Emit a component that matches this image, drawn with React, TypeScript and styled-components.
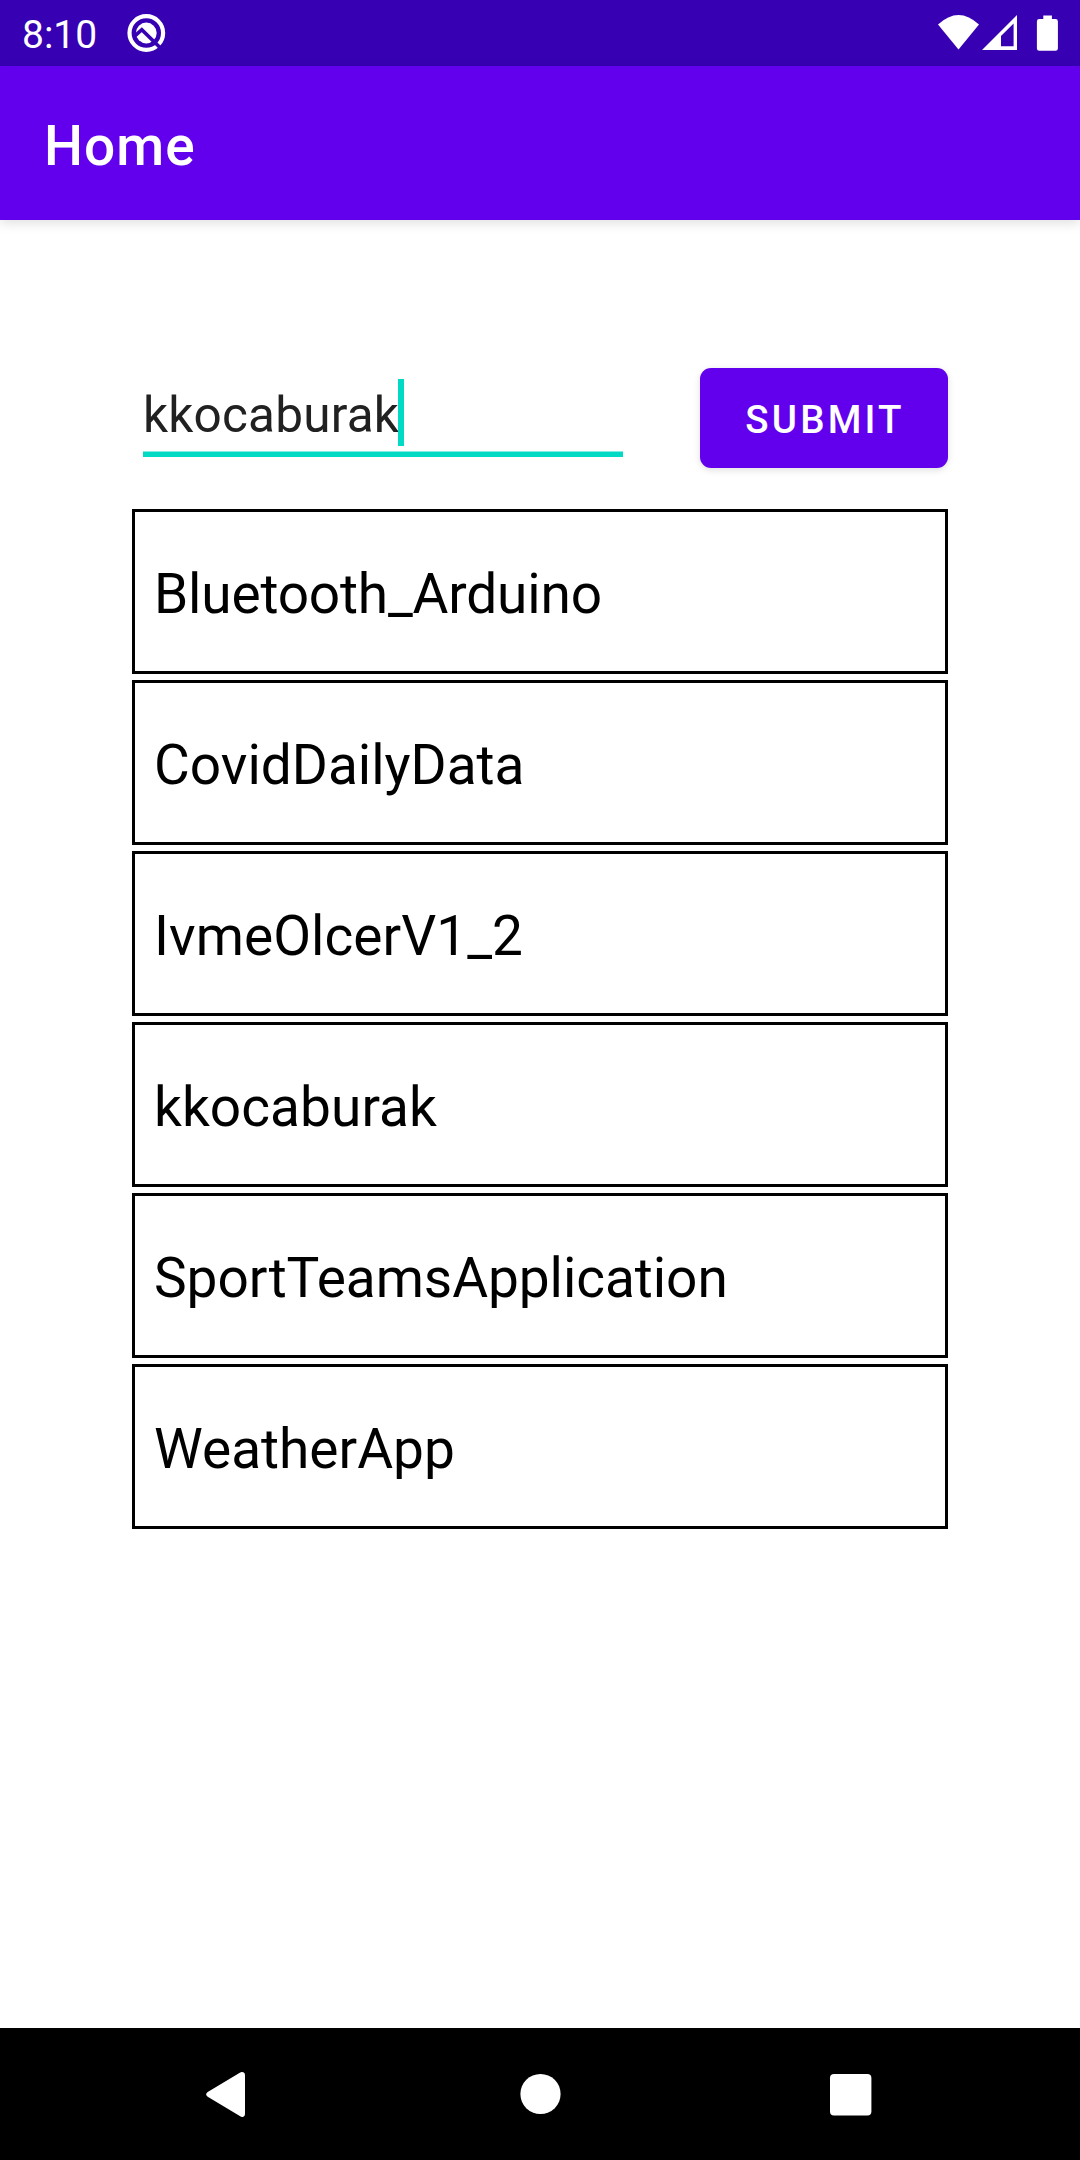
import React from "react";
import styled, { createGlobalStyle } from "styled-components";

const GlobalStyle = createGlobalStyle`
  *, *::before, *::after { box-sizing: border-box; }
  body { margin: 0; background: #fff; }
`;

const Screen = styled.div`
  display: flex;
  flex-direction: column;
  width: 1080px;
  height: 2160px;
  background: #fff;
  font-family: Roboto, "Noto Sans", sans-serif;
  overflow: hidden;
`;

const StatusBar = styled.header`
  display: flex;
  align-items: center;
  justify-content: space-between;
  height: 66px;
  padding: 0 21px 0 22px;
  background: #3700b3;
`;

const StatusGroup = styled.div<{ $gap: number }>`
  display: flex;
  align-items: center;
  gap: ${(p) => p.$gap}px;
  height: 66px;
`;

const Clock = styled.span`
  width: 75px;
  padding-top: 3px;
  color: #fff;
  font-size: 39px;
  line-height: 48px;
  white-space: nowrap;
`;

const SignalIcons = styled.svg`
  display: block;
`;

const AppBar = styled.div`
  display: flex;
  align-items: center;
  height: 154px;
  padding: 6px 44px 0;
  background: #6200ee;
  box-shadow: 0 3px 11px rgba(0, 0, 0, 0.13);
`;

const Title = styled.h1`
  margin: 0;
  color: #fff;
  font-size: 55px;
  font-weight: 500;
  line-height: 64px;
  letter-spacing: 1px;
`;

const Content = styled.main`
  display: flex;
  flex: 1;
  flex-direction: column;
  padding: 148px 132px 0;
`;

const SearchForm = styled.div`
  display: flex;
  align-items: flex-start;
  justify-content: space-between;
  height: 141px;
  padding-left: 11px;
`;

const Field = styled.div`
  display: flex;
  align-items: flex-start;
  width: 480px;
  height: 89px;
  padding-top: 11px;
  border-bottom: 5px solid #03dac5;
  box-shadow: inset 0 -1px 0 rgba(3, 218, 197, 0.5);
`;

const FieldText = styled.span`
  width: 255px;
  padding-top: 7px;
  color: #212121;
  font-size: 49.5px;
  line-height: 58px;
  letter-spacing: 0.2px;
  white-space: nowrap;
`;

const Caret = styled.span`
  width: 6px;
  height: 67px;
  background: #03dac5;
`;

const SubmitButton = styled.button`
  width: 248px;
  height: 100px;
  padding: 3px 0 0 2px;
  border: 0;
  border-radius: 11px;
  background: #6200ee;
  box-shadow: 0 2px 7px rgba(0, 0, 0, 0.13);
  color: #fff;
  font-family: inherit;
  font-size: 38.5px;
  font-weight: 500;
  line-height: 45px;
  letter-spacing: 3.2px;
`;

const RepoList = styled.ul`
  display: flex;
  flex-direction: column;
  gap: 6px;
  margin: 0;
  padding: 0;
  list-style: none;
`;

const RepoItem = styled.li<{ $tracking: number }>`
  display: flex;
  align-items: center;
  height: 165px;
  padding: 4px 19px 0;
  border: 3px solid #000;
  color: #000;
  font-size: 55px;
  line-height: 64px;
  letter-spacing: ${(p) => p.$tracking}px;
`;

const NavBar = styled.nav`
  display: flex;
  align-items: center;
  justify-content: space-between;
  height: 132px;
  padding: 0 187px 0 184px;
  background: #000;
`;

const NavIcon = styled.svg`
  display: block;
  fill: #fff;
`;

const repos = [
  { name: "Bluetooth_Arduino", tracking: -0.18 },
  { name: "CovidDailyData", tracking: 0 },
  { name: "IvmeOlcerV1_2", tracking: 0.04 },
  { name: "kkocaburak", tracking: 0.05 },
  { name: "SportTeamsApplication", tracking: -0.06 },
  { name: "WeatherApp", tracking: 0 },
];

export default function App() {
  return (
    <>
      <GlobalStyle />
      <Screen>
        <StatusBar>
          <StatusGroup $gap={29}>
            <Clock>8:10</Clock>
            <svg width="40" height="40" viewBox="0 0 40 40">
              <circle cx="20.3" cy="20" r="16.8" fill="none" stroke="#fff" strokeWidth="4.2" />
              <circle cx="20.3" cy="20" r="10.4" fill="#fff" />
              <path d="M9.2 22.7 15.8 16.7 34 34.5" fill="none" stroke="#3700b3" strokeWidth="3.6" />
            </svg>
          </StatusGroup>
          <SignalIcons width="121" height="66" viewBox="938 0 121 66" fill="#fff">
            <path d="M938 24.5Q958.5 5.5 979 24.5L958.5 49.5Z" />
            <path fillRule="evenodd" d="M982 50 1017 15V50ZM1001 46.2H1013.6V23.5L1001 36Z" />
            <path d="M1043.3 15.5h8.6v3.5h3.6a2.4 2.4 0 0 1 2.4 2.4v27a2.4 2.4 0 0 1-2.4 2.4h-16.2a2.4 2.4 0 0 1-2.4-2.4v-27a2.4 2.4 0 0 1 2.4-2.4h4z" />
          </SignalIcons>
        </StatusBar>
        <AppBar>
          <Title>Home</Title>
        </AppBar>
        <Content>
          <SearchForm>
            <Field>
              <FieldText>kkocaburak</FieldText>
              <Caret />
            </Field>
            <SubmitButton type="button">SUBMIT</SubmitButton>
          </SearchForm>
          <RepoList>
            {repos.map(({ name, tracking }) => (
              <RepoItem key={name} $tracking={tracking}>
                {name}
              </RepoItem>
            ))}
          </RepoList>
        </Content>
        <NavBar>
          <NavIcon width="83" height="60" viewBox="184 2064 83 60">
            <path d="M207.7 2092.1 239.8 2072.7Q241.6 2071.4 243.4 2072.3Q245 2073 245 2075V2114Q245 2116 243.4 2116.7Q241.8 2117.4 239.8 2116.1L207.7 2096.7Q204.5 2094.4 207.7 2092.1Z" />
          </NavIcon>
          <NavIcon width="60" height="60" viewBox="508.5 2064 60 60">
            <circle cx="540" cy="2094" r="20.1" />
          </NavIcon>
          <NavIcon width="83" height="60" viewBox="810 2064 83 60">
            <rect x="830" y="2074" width="41.4" height="41.4" rx="4" />
          </NavIcon>
        </NavBar>
      </Screen>
    </>
  );
}
